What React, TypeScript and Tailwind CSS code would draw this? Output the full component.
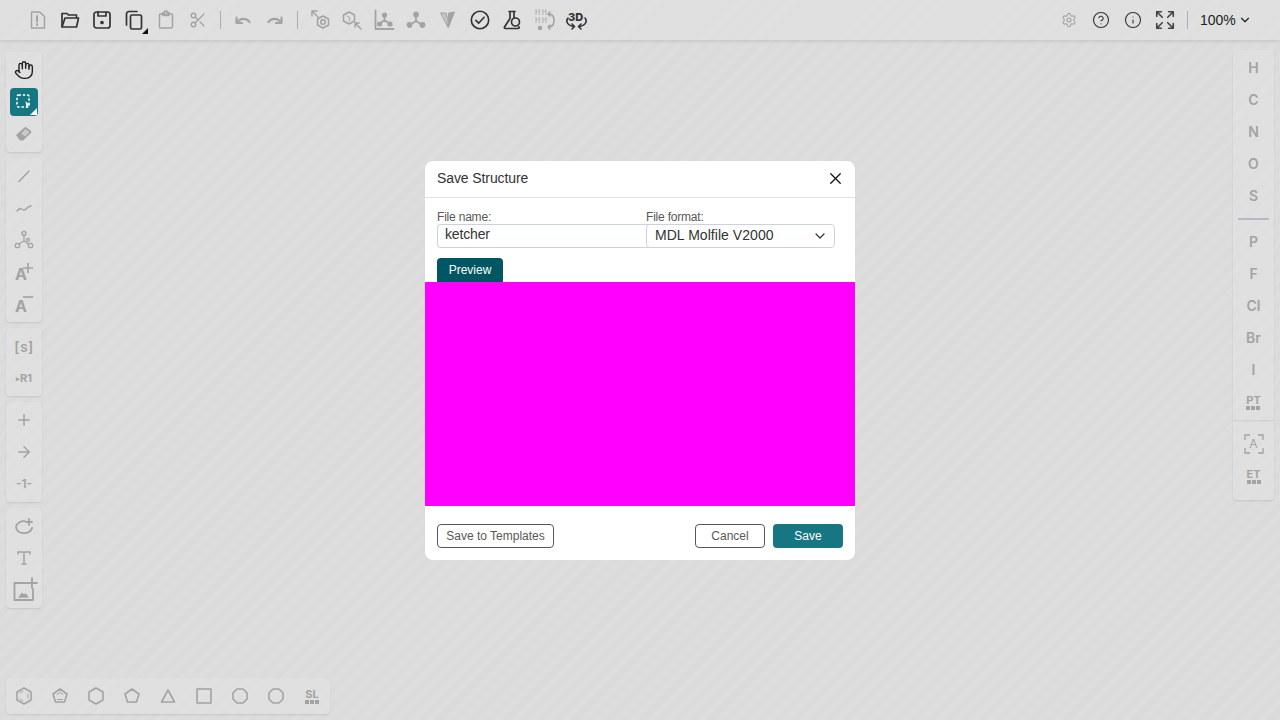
import React from 'react';
import { Hand, X, ChevronDown, Plus, ArrowRight, Settings, CircleHelp, Info, Scissors } from 'lucide-react';

const G = '#a3a3a3';
const D = '#333333';

function Ic({ c = G, w = 1.5, children, s = 24 }: { c?: string; w?: number; children: React.ReactNode; s?: number }) {
  return (
    <svg width={s} height={s} viewBox="0 0 24 24" fill="none" stroke={c} strokeWidth={w} strokeLinecap="round" strokeLinejoin="round" className="overflow-visible">
      {children}
    </svg>
  );
}

function Btn({ children }: { children: React.ReactNode }) {
  return <div className="relative w-7 h-7 shrink-0 flex items-center justify-center">{children}</div>;
}

function Sep() {
  return <div className="w-px h-[18px] mx-1 bg-[#a9adb8] shrink-0" />;
}

function Panel({ children }: { children: React.ReactNode }) {
  return <div className="w-9 p-1 flex flex-col gap-1 rounded bg-white/10 shadow-[0_1px_2px_rgba(0,0,0,0.1)]">{children}</div>;
}

function Grid() {
  return (
    <div className="flex gap-px mt-px">
      <div className="w-1 h-1 bg-[#a3a3a3]" />
      <div className="w-1 h-1 bg-[#a3a3a3]" />
      <div className="w-1 h-1 bg-[#a3a3a3]" />
    </div>
  );
}

function Tpl({ t }: { t: string }) {
  return (
    <div className="flex flex-col items-center font-['Inter',sans-serif] text-[11px] leading-[10px] font-bold text-[#a3a3a3]">
      {t}
      <Grid />
    </div>
  );
}

function El({ t }: { t: string }) {
  return <Btn><span className="font-['Inter',sans-serif] text-sm font-semibold text-[#a3a3a3]">{t}</span></Btn>;
}

function Poly({ pts, inner }: { pts: string; inner?: string }) {
  return (
    <Ic w={1.6}>
      <polygon points={pts} />
      {inner && <path d={inner} strokeWidth={1} />}
    </Ic>
  );
}

function TopBar() {
  return (
    <div className="h-10 flex items-center justify-between pl-6 pr-6 bg-white/10 shadow-[0_1px_4px_rgba(0,0,0,0.12)] shrink-0">
      <div className="flex items-center gap-1">
        <Btn><Ic><path d="M5.500 4h8l5 4.500V20h-13z" /><path d="M11 8v5.500M11 16v1" strokeWidth={2} /></Ic></Btn>
        <Btn><Ic c={D} w={1.700}><path d="M4 18.500V5.500h5l1.500 1.500H18.500v2.500" /><path d="M4 19h14.500l2-9H7z" /></Ic></Btn>
        <Btn><Ic c={D} w={1.700}><rect x="4" y="4" width="16" height="16" rx="2.500" /><path d="M8 4v4h8V4" /><circle cx="12" cy="14.500" r="1" fill={D} /></Ic></Btn>
        <Btn>
          <Ic c={D} w={1.700}><path d="M15 3.500H7A2.500 2.500 0 0 0 4.500 6v11" /><rect x="8.500" y="7" width="11" height="14" rx="1.500" /></Ic>
          <svg width="6" height="6" viewBox="0 0 6 6" className="absolute right-0 bottom-0"><polygon points="6,0 6,6 0,6" fill="#111" /></svg>
        </Btn>
        <Btn><Ic><rect x="5.500" y="6" width="13" height="14" rx="1" /><path d="M9 6V4.500h1.500a1.500 1.500 0 0 1 3 0H15V7.500H9z" /></Ic></Btn>
        <Btn><Scissors size={18} color={G} strokeWidth={1.800} /></Btn>
        <Sep />
        <Btn><Ic w={2.200}><path d="M5.500 15V9.500M5.500 15H11M6 14.500C9 10 15.500 9.500 18.500 14" /></Ic></Btn>
        <Btn><Ic w={2.200}><path d="M18.500 15V9.500M18.500 15H13M18 14.500C15 10 8.500 9.500 5.500 14" /></Ic></Btn>
        <Sep />
        <Btn><Ic><path d="M4 3l6 6M4 8V3h5" /><polygon points="15,8 20.500,11 20.500,17 15,20 9.500,17 9.500,11" /><circle cx="15" cy="14" r="2.300" /></Ic></Btn>
        <Btn><Ic><polygon points="9,4 14.500,7 14.500,13 9,16 3.500,13 3.500,7" /><path d="M7 8l3 2-1 3" strokeWidth={1} /><path d="M15 15l6 6M15 19v-4h4" /></Ic></Btn>
        <Btn><Ic w={1.800}><path d="M3.500 2.500V21h18" /><circle cx="12.500" cy="7" r="1.700" fill={G} /><circle cx="7.500" cy="16" r="1.700" fill={G} /><circle cx="18" cy="16" r="1.700" fill={G} /><path d="M12.500 7v5l-5 4M12.500 12l5.500 4" /></Ic></Btn>
        <Btn><Ic w={1.800}><circle cx="12" cy="6.500" r="2" fill={G} /><circle cx="5.500" cy="17" r="2" fill={G} /><circle cx="18.500" cy="17" r="2" fill={G} /><path d="M12 6.500v6.500l-6.500 4M12 13l6.500 4" /></Ic></Btn>
        <Btn><Ic w={1}><polygon points="5,5 10,5 12,12 12,19" fill="#c4c4c4" /><polygon points="13,5 18.500,4 12.500,19" fill={G} /></Ic></Btn>
        <Btn><Ic c={D} w={1.800} s={22}><circle cx="12" cy="12" r="9.500" /><path d="M7.500 12.500l3 3 6-6.500" /></Ic></Btn>
        <Btn><Ic c={D} w={1.700}><path d="M9 3.500h6M10 3.500v7L4.500 19a1 1 0 0 0 1 1.500H18a1 1 0 0 0 1-1.500" /><circle cx="15.500" cy="14" r="4" /><path d="M14 3.500v6" /></Ic></Btn>
        <Btn>
          <div className="absolute left-[3px] top-[3px] w-4 text-center font-['Inter',sans-serif] text-[7px] leading-[8px] font-semibold text-[#b4b4b4]">H H<br />H H</div>
          <Ic><circle cx="8" cy="20" r="1.500" fill={G} /><path d="M17.500 6c3 .5 4.500 3 4.500 6.500s-1.500 6-4.500 6.500" strokeWidth={1.600} /><path d="M18 4l-2 2 2 2M18 17l-2 2 2 2" fill={G} /></Ic>
        </Btn>
        <Btn>
          <span className="absolute left-[6px] top-[5px] font-['Inter',sans-serif] text-[11px] leading-[12px] font-extrabold text-[#333]">3D</span>
          <Ic c={D} w={1.600} s={24}><path d="M4 10C2 12 2 17 9.500 18.500M21 10C23 12 23 17 15.500 18.500" /><path d="M8 16l2.500 2.500L8 21M17 16l-2.500 2.500L17 21" /></Ic>
        </Btn>
      </div>
      <div className="flex items-center gap-1">
        <Btn><Settings size={16} color={G} strokeWidth={1.600} /></Btn>
        <Btn><CircleHelp size={18} color={D} strokeWidth={1.500} /></Btn>
        <Btn><Info size={18} color={D} strokeWidth={1.500} /></Btn>
        <Btn><Ic c="#444444" w={1.800} s={22}><path d="M3 8V3h5M3 3l6 6M21 8V3h-5M21 3l-6 6M3 16v5h5M3 21l6-6M21 16v5h-5M21 21l-6-6" /></Ic></Btn>
        <Sep />
        <div className="w-[60px] pl-1 flex items-center gap-[2px] text-sm text-[#222]">
          100%<ChevronDown size={14} color="#222" strokeWidth={2} />
        </div>
      </div>
    </div>
  );
}

function LeftBar() {
  return (
    <div className="flex flex-col gap-1.5 pl-1.5 pt-3">
      <Panel>
        <Btn><Hand size={20} color="#222" strokeWidth={1.700} /></Btn>
        <div className="relative w-7 h-7 rounded bg-[#167782] flex items-center justify-center">
          <svg width="18" height="18" viewBox="0 0 18 18" fill="none">
            <rect x="2" y="2" width="12" height="12" rx="1.500" stroke="#fff" strokeWidth="1.500" strokeDasharray="2.500 1.800" />
            <path d="M10.500 8l4.500 4.500-2 .3-1.300 2.200z" fill="#fff" />
          </svg>
          <svg width="7" height="7" viewBox="0 0 7 7" className="absolute right-[1px] bottom-[1px]"><polygon points="7,0 7,7 0,7" fill="#fff" /></svg>
        </div>
        <Btn>
          <svg width="18" height="18" viewBox="0 0 18 18">
            <path d="M1 10L9.500 2.500a1.500 1.500 0 0 1 2 0l4.500 3.500a1.500 1.500 0 0 1 0 2L8 15.500H5z" fill={G} />
            <path d="M6 8.500L10.500 4l4 3-4.500 4.500z" fill="#c9c9c9" />
          </svg>
        </Btn>
      </Panel>
      <Panel>
        <Btn><Ic><path d="M7 17.500L17 7" /></Ic></Btn>
        <Btn><Ic><path d="M5 15c1.500-2 3-3 4.500-2 2 1.500 4 1 5.500-1 1-1 2-1.500 4-2" /></Ic></Btn>
        <Btn><Ic w={1.300}><circle cx="12" cy="5.500" r="2" /><circle cx="5.500" cy="17.500" r="2.200" /><circle cx="18.500" cy="17.500" r="2.200" /><circle cx="16" cy="12" r="1.500" /><path d="M12 7.500v5.500l-5 3M12 13l4.500 3" /></Ic></Btn>
        <Btn>
          <span className="font-['Inter',sans-serif] text-base leading-none font-bold text-[#a3a3a3] -ml-[6px] mt-[3px]">A</span>
          <svg width="10" height="10" viewBox="0 0 10 10" className="absolute right-[5px] top-[5px]"><path d="M5 0v10M0 5h10" stroke={G} strokeWidth="1.700" /></svg>
        </Btn>
        <Btn>
          <span className="font-['Inter',sans-serif] text-base leading-none font-bold text-[#a3a3a3] -ml-[6px] mt-[3px]">A</span>
          <svg width="10" height="4" viewBox="0 0 10 4" className="absolute right-[5px] top-[5px]"><path d="M0 2h10" stroke={G} strokeWidth="1.700" /></svg>
        </Btn>
      </Panel>
      <Panel>
        <Btn><span className="font-['Inter',sans-serif] text-[14px] font-semibold text-[#a3a3a3] tracking-[0.5px]">[s]</span></Btn>
        <Btn><span className="font-['Inter',sans-serif] text-[11px] font-bold text-[#a3a3a3]"><span className="text-[7px] align-[1px]">▸</span>R1</span></Btn>
      </Panel>
      <Panel>
        <Btn><Plus size={18} color={G} strokeWidth={2} /></Btn>
        <Btn><ArrowRight size={18} color={G} strokeWidth={2} /></Btn>
        <Btn><span className="font-['Inter',sans-serif] text-[12px] font-semibold text-[#a3a3a3]">-1-</span></Btn>
      </Panel>
      <Panel>
        <Btn><Ic w={1.800}><path d="M20 14a8 6 0 1 1-7-6.800" /><path d="M17 5v6M14 8h6" /></Ic></Btn>
        <Btn><Ic w={1.500}><path d="M6 8V6h12v2M12 6v12M10 18h4" /></Ic></Btn>
        <Btn><Ic w={1.800} s={24}><path d="M13 5H1.500v17H20V11" transform="translate(1 0)" /><path d="M7 19l3-4 2 2 1.500-1.500 2.500 3.500z" fill={G} strokeWidth={0.800} /><path d="M20 0v10M15 5h10" /></Ic></Btn>
      </Panel>
    </div>
  );
}

function BottomBar() {
  const items: [string, string?][] = [
    ['12,4 19,8 19,16 12,20 5,16 5,8', 'M8 9l3-2M8 15l3 2M16 10v4'],
    ['12,5 19,10 16.500,18 7.500,18 5,10', 'M9 10.500l3-2 3 2M9.500 15.500h5'],
    ['12,4 19,8 19,16 12,20 5,16 5,8'],
    ['12,5 19,10 16.500,18 7.500,18 5,10'],
    ['12,6 18.500,18 5.500,18'],
    ['5,5 19,5 19,19 5,19'],
    ['9,5 15,5 19,9 19,15 15,19 9,19 5,15 5,9'],
    ['9,5 15,5 19,9 19,15 15,19 9,19 5,15 5,9'],
  ];
  return (
    <div className="mb-1.5 ml-1.5 w-[324px] h-9 flex items-center justify-between px-1 rounded bg-white/10 shadow-[0_1px_2px_rgba(0,0,0,0.1)]">
      {items.map((it, i) => (
        <Btn key={i}><Poly pts={it[0]} inner={it[1]} /></Btn>
      ))}
      <Btn><Tpl t="SL" /></Btn>
    </div>
  );
}

function RightBar() {
  return (
    <div className="w-[41px] mr-1.5 pt-2.5 flex flex-col">
      <div className="flex flex-col items-center gap-1 py-1 rounded-t bg-white/10 shadow-[0_1px_2px_rgba(0,0,0,0.1)]">
        {['H', 'C', 'N', 'O', 'S'].map((t) => <El key={t} t={t} />)}
        <div className="w-[31px] h-0.5 my-1 bg-[#b4b9c4]" />
        {['P', 'F', 'Cl', 'Br', 'I'].map((t) => <El key={t} t={t} />)}
        <Btn><Tpl t="PT" /></Btn>
      </div>
      <div className="flex flex-col items-center gap-1 py-2.5 rounded-b bg-white/10 shadow-[0_1px_2px_rgba(0,0,0,0.1)]">
        <Btn>
          <svg width="20" height="20" viewBox="0 0 20 20" fill="none" stroke={G} strokeWidth="1.300"><path d="M1 6V1h5M14 1h5v5M1 14v5h5M14 19h5v-5" /></svg>
          <span className="absolute font-['Inter',sans-serif] text-xs text-[#a3a3a3]">A</span>
        </Btn>
        <Btn><Tpl t="ET" /></Btn>
      </div>
    </div>
  );
}

function Modal() {
  return (
    <div className="absolute inset-0 flex items-center justify-center">
      <div className="w-[430px] h-[399px] flex flex-col rounded-lg bg-white overflow-hidden">
        <div className="h-[37px] shrink-0 flex items-center justify-between pl-3 pr-2.5 border-b border-[#e1e5ea]">
          <span className="text-sm leading-5 -mt-px tracking-[-0.1px] text-[#333]">Save Structure</span>
          <X size={19} color="#111" strokeWidth={1.600} />
        </div>
        <div className="flex pl-3 pt-3 h-[60px] shrink-0">
          <label className="w-[209px] flex flex-col text-xs leading-[14px] tracking-[-0.2px] text-[#585858]">
            File name:
            <div className="h-6 pl-[7px] -mr-1 rounded-l border border-r-0 border-[#cad3dd] text-sm leading-[19px] tracking-[-0.15px] text-[#333]">ketcher</div>
          </label>
          <label className="w-[189px] flex flex-col text-xs leading-[14px] tracking-[-0.2px] text-[#585858]">
            File format:
            <div className="h-6 pl-2 pr-1.5 flex items-center justify-between rounded border border-[#cad3dd] bg-white text-sm tracking-[0.05px] text-[#333]">
              <span className="-mt-px">MDL Molfile V2000</span>
              <ChevronDown size={16} color="#333" strokeWidth={1.800} />
            </div>
          </label>
        </div>
        <div className="pl-3 shrink-0">
          <div className="w-[66px] h-6 flex items-center justify-center rounded-t bg-[#005662] text-xs text-white">Preview</div>
        </div>
        <div className="h-[224px] shrink-0 bg-[#ff00ff]" />
        <div className="flex items-center gap-2 px-3 pt-[18px] text-xs text-[#585858]">
          <div className="w-[117px] h-6 flex items-center justify-center rounded border border-[#585858] mr-auto">Save to Templates</div>
          <div className="w-[70px] h-6 flex items-center justify-center rounded border border-[#585858]">Cancel</div>
          <div className="w-[70px] h-6 flex items-center justify-center rounded bg-[#167782] text-white">Save</div>
        </div>
      </div>
    </div>
  );
}

export default function App() {
  return (
    <div className="relative w-[1280px] h-[720px] overflow-hidden flex flex-col font-['Liberation_Sans',sans-serif] bg-[repeating-linear-gradient(135deg,#dbdbdb_0,#dbdbdb_6px,#dddddd_6px,#dddddd_12px)]">
      <TopBar />
      <div className="flex-1 flex justify-between items-start">
        <LeftBar />
        <RightBar />
      </div>
      <BottomBar />
      <Modal />
    </div>
  );
}
